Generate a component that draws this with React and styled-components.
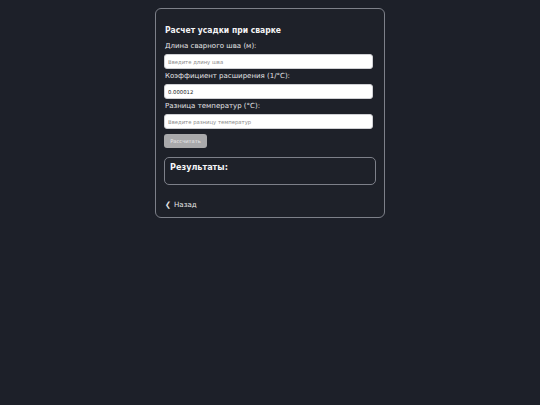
import React, { useState } from 'react';
import styled, { createGlobalStyle } from 'styled-components';

const GlobalStyle = createGlobalStyle`
  html, body {
    margin: 0;
    padding: 0;
    background: #1d2029;
    font-family: "DejaVu Sans", Verdana, sans-serif;
    color: #e8e8ea;
  }
`;

const Page = styled.div`
  display: flex;
  justify-content: center;
  align-items: flex-start;
  padding-top: 8px;
  min-height: 397px;
`;

const Card = styled.div`
  width: 230px;
  box-sizing: border-box;
  border: 1px solid #7d8089;
  border-radius: 6px;
  background: #1e2129;
  padding: 14px 9px 6px 8px;
  display: flex;
  flex-direction: column;
`;

const Title = styled.h2`
  margin: 0 0 3px 1px;
  font-family: "DejaVu Sans Condensed", "DejaVu Sans", sans-serif;
  font-size: 8.5px;
  line-height: 14px;
  font-weight: bold;
  color: #f4f4f6;
`;

const Field = styled.div`
  display: flex;
  flex-direction: column;
  margin-bottom: 1px;
`;

const Label = styled.label`
  font-size: 7px;
  line-height: 12px;
  margin: 0 0 2px 1px;
  color: #e6e6e8;
`;

const Input = styled.input`
  width: 209px;
  height: 15px;
  box-sizing: border-box;
  border: 1px solid #cfd0d4;
  border-radius: 3px;
  background: #fff;
  padding: 0 3px;
  font-family: "DejaVu Sans", Verdana, sans-serif;
  font-size: 5.3px;
  color: #222;
  outline: none;

  &::placeholder {
    color: #8a8a8a;
  }
`;

const Button = styled.button`
  align-self: flex-start;
  margin-top: 4px;
  width: 43px;
  height: 14px;
  border: none;
  border-radius: 3px;
  background: #a9a9ab;
  color: #e9e9eb;
  font-family: "DejaVu Sans", Verdana, sans-serif;
  font-size: 5.2px;
  padding: 0;
`;

const Results = styled.div`
  margin-top: 9px;
  width: 212px;
  height: 28px;
  box-sizing: border-box;
  border: 1px solid #7d8089;
  border-radius: 5px;
  padding: 3px 5px;
`;

const ResultsTitle = styled.h3`
  margin: 0;
  font-family: "DejaVu Sans Condensed", "DejaVu Sans", sans-serif;
  font-size: 9px;
  line-height: 13px;
  font-weight: bold;
  color: #f4f4f6;
`;

const Back = styled.a`
  margin: 14px 0 0 1px;
  display: flex;
  align-items: center;
  gap: 3px;
  font-size: 7.1px;
  line-height: 12px;
  color: #e6e6e8;
  text-decoration: none;
`;

const fields = [
  { label: 'Длина сварного шва (м):', placeholder: 'Введите длину шва', value: '' },
  { label: 'Коэффициент расширения (1/°C):', placeholder: '', value: '0.000012' },
  { label: 'Разница температур (°C):', placeholder: 'Введите разницу температур', value: '' },
];

export default function App() {
  const [values, setValues] = useState(fields.map((f) => f.value));

  return (
    <>
      <GlobalStyle />
      <Page>
        <Card>
          <Title>Расчет усадки при сварке</Title>
          {fields.map((f, i) => (
            <Field key={f.label}>
              <Label>{f.label}</Label>
              <Input
                type="text"
                placeholder={f.placeholder}
                value={values[i]}
                onChange={(e) => {
                  const next = [...values];
                  next[i] = e.target.value;
                  setValues(next);
                }}
              />
            </Field>
          ))}
          <Button disabled>Рассчитать</Button>
          <Results>
            <ResultsTitle>Результаты:</ResultsTitle>
          </Results>
          <Back href="#">
            <span>❮</span>
            <span>Назад</span>
          </Back>
        </Card>
      </Page>
    </>
  );
}
